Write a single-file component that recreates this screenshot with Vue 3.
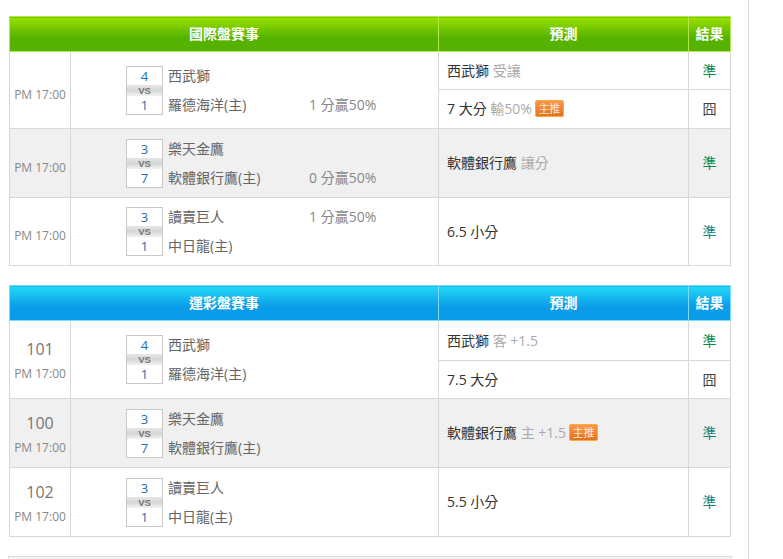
<script setup>
const tables = [
  {
    title: '國際盤賽事', theme: 'green', rows: [
      { time: 'PM 17:00', a: '4', b: '1', t1: '西武獅', t2: '羅德海洋(主)', n2: '1 分贏50%', h1: 38, h2: 39,
        p: [{ m: '西武獅', s: '受讓', r: '準', kind: 'win' }, { m: '7 大分', s: '輸50%', tag: true, r: '囧', kind: 'lose' }] },
      { time: 'PM 17:00', alt: true, a: '3', b: '7', t1: '樂天金鷹', t2: '軟體銀行鷹(主)', n2: '0 分贏50%', h1: 69,
        p: [{ m: '軟體銀行鷹', s: '讓分', r: '準', kind: 'win' }] },
      { time: 'PM 17:00', a: '3', b: '1', t1: '讀賣巨人', n1: '1 分贏50%', t2: '中日龍(主)', h1: 68,
        p: [{ m: '6.5 小分', r: '準', kind: 'total' }] },
    ],
  },
  {
    title: '運彩盤賽事', theme: 'blue', rows: [
      { no: '101', time: 'PM 17:00', a: '4', b: '1', t1: '西武獅', t2: '羅德海洋(主)', h1: 40, h2: 38,
        p: [{ m: '西武獅', s: '客 +1.5', r: '準', kind: 'win' }, { m: '7.5 大分', r: '囧', kind: 'lose' }] },
      { no: '100', time: 'PM 17:00', alt: true, a: '3', b: '7', t1: '樂天金鷹', t2: '軟體銀行鷹(主)', h1: 69,
        p: [{ m: '軟體銀行鷹', s: '主 +1.5', tag: true, r: '準', kind: 'total' }] },
      { no: '102', time: 'PM 17:00', a: '3', b: '1', t1: '讀賣巨人', t2: '中日龍(主)', h1: 69,
        p: [{ m: '5.5 小分', r: '準', kind: 'total' }] },
    ],
  },
]
</script>

<template>
  <div class="page">
    <main class="content">
      <table v-for="tb in tables" :key="tb.title" class="board" :class="tb.theme">
        <colgroup>
          <col class="c-time" />
          <col class="c-match" />
          <col class="c-pred" />
          <col class="c-res" />
        </colgroup>
        <thead>
          <tr>
            <th colspan="2">{{ tb.title }}</th>
            <th>預測</th>
            <th>結果</th>
          </tr>
        </thead>
        <tbody>
          <template v-for="(row, i) in tb.rows" :key="i">
            <tr :class="{ alt: row.alt }" :style="{ height: row.h1 + 'px' }">
              <td class="time" :class="{ numbered: row.no }" :rowspan="row.p.length">
                <div v-if="row.no" class="no">{{ row.no }}</div>
                <div>{{ row.time }}</div>
              </td>
              <td class="match" :rowspan="row.p.length">
                <div class="match-in">
                  <div class="score">
                    <div class="num">{{ row.a }}</div>
                    <div class="vs">VS</div>
                    <div class="num">{{ row.b }}</div>
                  </div>
                  <div class="teams">
                    <div class="team"><span class="name">{{ row.t1 }}</span><span class="note">{{ row.n1 }}</span></div>
                    <div class="team"><span class="name">{{ row.t2 }}</span><span class="note">{{ row.n2 }}</span></div>
                  </div>
                </div>
              </td>
              <td class="pred">
                {{ row.p[0].m }} <span v-if="row.p[0].s" class="sub">{{ row.p[0].s }}</span><span v-if="row.p[0].tag" class="tag">主推</span>
              </td>
              <td class="res" :class="row.p[0].kind">{{ row.p[0].r }}</td>
            </tr>
            <tr v-if="row.p[1]" :style="{ height: row.h2 + 'px' }">
              <td class="pred">
                {{ row.p[1].m }} <span v-if="row.p[1].s" class="sub">{{ row.p[1].s }}</span><span v-if="row.p[1].tag" class="tag">主推</span>
              </td>
              <td class="res" :class="row.p[1].kind">{{ row.p[1].r }}</td>
            </tr>
          </template>
        </tbody>
      </table>
      <div class="next"></div>
    </main>
  </div>
</template>

<style>
html, body { margin: 0; background: #fff; overflow: hidden; }
</style>

<style scoped>
.page {
  height: 559px;
  width: 749px;
  box-sizing: border-box;
  border-right: 1px solid #d8d8d8;
  overflow: hidden;
  font-family: "Open Sans", "Noto Sans CJK TC", sans-serif;
  font-size: 14px;
  color: #555;
}
.content {
  padding: 16px 0 0 9px;
  width: 723px;
}
.board {
  width: 721px;
  table-layout: fixed;
  border-collapse: collapse;
  margin-bottom: 19px;
}
.c-time { width: 61px; }
.c-match { width: 368px; }
.c-pred { width: 250px; }
.c-res { width: 42px; }
th {
  height: 35px;
  padding: 0 0 3px;
  box-sizing: border-box;
  color: #fff;
  font-size: 14px;
  font-weight: 700;
  text-align: center;
}
.green th {
  background: linear-gradient(#9ae000, #55b200 60%);
  border: 1px solid #b4e650;
}
.blue th {
  background: linear-gradient(#24d8f6, #0a9ce8 60%);
  border: 1px solid #7ddcf7;
}
td {
  border: 1px solid #d8d8d8;
  padding: 0;
}
.alt td { background: #f0f0f0; }
.time {
  text-align: center;
  font-size: 12px;
  color: #888;
  padding-top: 8px;
}
.time.numbered { padding-top: 1px; }
.no {
  font-size: 16px;
  line-height: 22px;
  margin-bottom: 5px;
  color: #777;
}
.match-in {
  display: flex;
  padding-left: 55px;
  align-items: center;
}
.score {
  width: 37px;
  box-sizing: border-box;
  border: 1px solid #c8c8c8;
  background: #fff;
  text-align: center;
}
.num {
  height: 18px;
  line-height: 18px;
  font-size: 13px;
  color: #1a6fb0;
}
.vs {
  height: 11px;
  line-height: 11px;
  font-family: "Liberation Sans", sans-serif;
  font-size: 9.5px;
  font-weight: 700;
  color: #777;
  background: linear-gradient(#e6e6e6, #d6d6d6 50%, #f2f2f2);
}
.teams {
  margin-left: 5px;
  display: flex;
  flex-direction: column;
  gap: 9px;
}
.team {
  display: flex;
  height: 20px;
  line-height: 20px;
  color: #666;
}
.name { width: 141px; }
.note { color: #888; }
.pred {
  padding: 0 0 2px 8px;
  color: #333;
}
.sub { color: #aaa; }
.tag {
  display: inline-block;
  margin-left: 3px;
  width: 29px;
  height: 17px;
  line-height: 15px;
  box-sizing: border-box;
  border: 1px solid #ffa93a;
  border-radius: 2px;
  background: linear-gradient(#f59a4a, #e5701f);
  color: #ffe9d6;
  font-size: 11px;
  text-align: center;
  vertical-align: 1px;
}
.res {
  text-align: center;
  padding-bottom: 2px;
}
.win { color: #0a8a3a; }
.total { color: #1f7f70; }
.lose { color: #444; }
.next {
  height: 20px;
  width: 724px;
  margin-left: -1px;
  box-sizing: border-box;
  border: 1px solid #ddd;
  background: #f5f5f5;
}
</style>
